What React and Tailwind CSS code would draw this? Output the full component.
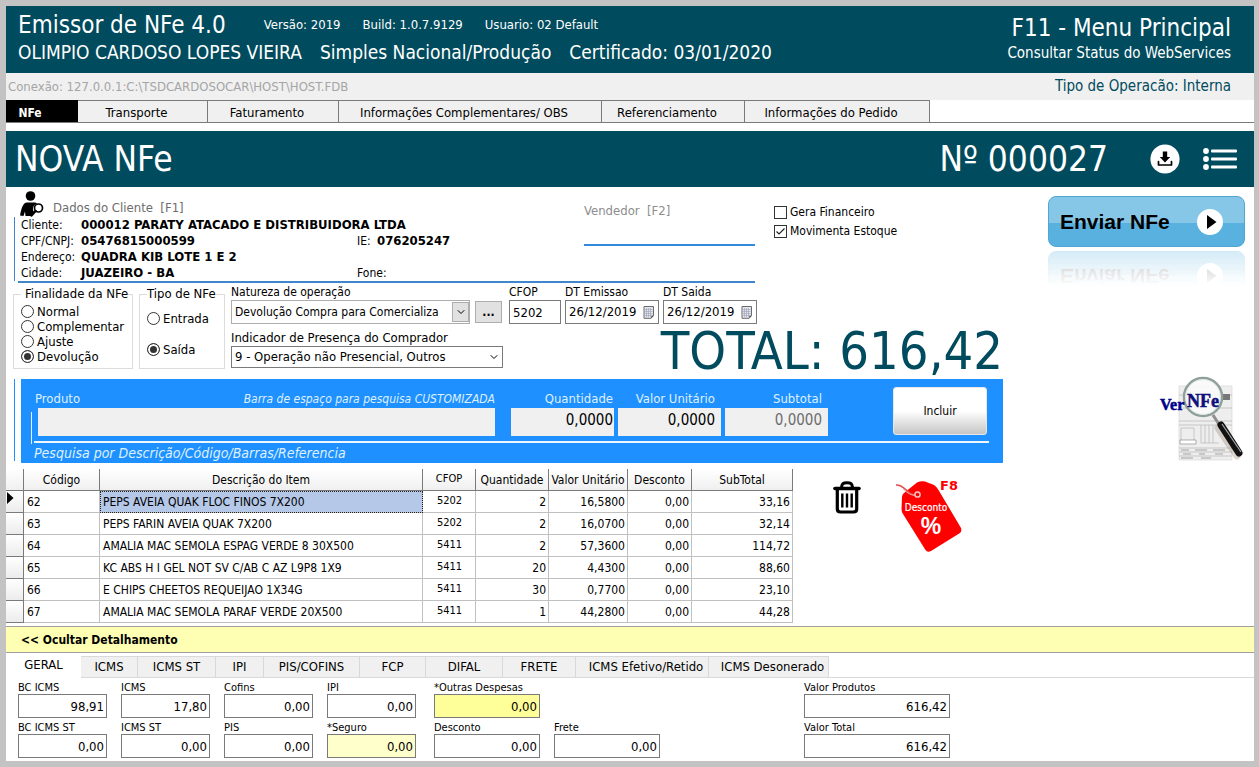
import { useState } from 'react';
import { FiChevronDown } from 'react-icons/fi';

const mainTabs = [
  { label: 'NFe', width: 'w-[72px]' },
  { label: 'Transporte', width: 'w-[130px]' },
  { label: 'Faturamento', width: 'w-[131px]' },
  { label: 'Informações Complementares/ OBS', width: 'w-[263px]' },
  { label: 'Referenciamento', width: 'w-[143px]' },
  { label: 'Informações do Pedido', width: 'w-[185px]' },
];

const detailTabs = [
  { label: 'GERAL', width: 'w-[75px]' },
  { label: 'ICMS', width: 'w-[57px]' },
  { label: 'ICMS ST', width: 'w-[78px]' },
  { label: 'IPI', width: 'w-12' },
  { label: 'PIS/COFINS', width: 'w-24' },
  { label: 'FCP', width: 'w-[66px]' },
  { label: 'DIFAL', width: 'w-[77px]' },
  { label: 'FRETE', width: 'w-[73px]' },
  { label: 'ICMS Efetivo/Retido', width: 'w-[133px] pl-2' },
  { label: 'ICMS Desonerado', width: 'w-[120px] pl-2' },
];

const items = [
  { codigo: '62', descricao: 'PEPS AVEIA QUAK FLOC FINOS 7X200', cfop: '5202', qtd: '2', unit: '16,5800', desc: '0,00', sub: '33,16' },
  { codigo: '63', descricao: 'PEPS FARIN AVEIA QUAK 7X200', cfop: '5202', qtd: '2', unit: '16,0700', desc: '0,00', sub: '32,14' },
  { codigo: '64', descricao: 'AMALIA MAC SEMOLA ESPAG VERDE 8 30X500', cfop: '5411', qtd: '2', unit: '57,3600', desc: '0,00', sub: '114,72' },
  { codigo: '65', descricao: 'KC ABS H I GEL NOT SV C/AB C AZ L9P8 1X9', cfop: '5411', qtd: '20', unit: '4,4300', desc: '0,00', sub: '88,60' },
  { codigo: '66', descricao: 'E CHIPS CHEETOS REQUEIJAO 1X34G', cfop: '5411', qtd: '30', unit: '0,7700', desc: '0,00', sub: '23,10' },
  { codigo: '67', descricao: 'AMALIA MAC SEMOLA PARAF VERDE 20X500', cfop: '5411', qtd: '1', unit: '44,2800', desc: '0,00', sub: '44,28' },
];

function ClientIcon() {
  return (
    <svg width="24" height="26" viewBox="0 0 24 26">
      <circle cx="10.500" cy="5" r="4.800" />
      <path d="M0 24.500 C1.500 17 3 11.500 7 11.500 H14 C15.500 11.500 16.500 12 17.300 12.600 A5.300 5.300 0 0 0 14 21 L11 25 H5.500 L5 20.500 L3.500 25 Z" />
      <circle cx="18.500" cy="17" r="4" fill="#fff" stroke="#000" strokeWidth="1.700" />
      <path d="M15.500 20 L11.500 24.500" stroke="#000" strokeWidth="2.400" strokeLinecap="round" />
    </svg>
  );
}

function DownloadIcon() {
  return (
    <svg width="30" height="30" viewBox="0 0 30 30">
      <circle cx="15" cy="15" r="14.600" fill="#fff" />
      <path d="M12.800 7.500 H17.200 V13 H20.200 L15 18.600 L9.800 13 H12.800 Z" />
      <path d="M8.500 17.500 V21 H21.500 V17.500" fill="none" stroke="#000" strokeWidth="1.700" strokeLinejoin="round" strokeLinecap="round" />
    </svg>
  );
}

function ListIcon() {
  return (
    <svg width="34" height="22" viewBox="0 0 34 22" fill="#fff">
      {[3, 11, 19].map((y) => (
        <g key={y}>
          <circle cx="3" cy={y} r="2.900" />
          <rect x="8" y={y - 1.5} width="26" height="3" rx="1" />
        </g>
      ))}
    </svg>
  );
}

function CalendarIcon() {
  return (
    <svg width="12" height="13" viewBox="0 0 12 13" className="shrink-0">
      <path d="M1 0.500 H10.500 V9.500 L8 12.300 H1 Z" fill="#e4e6ef" stroke="#6b6b6b" />
      <path d="M2 3.500 H9.500 M2 5.500 H9.500 M2 7.500 H9.500 M2 9.500 H8 M3.500 2 V11 M5.500 2 V11 M7.500 2 V11" stroke="#9a9fb5" strokeWidth="0.600" />
      <path d="M11 9.500 L8.300 12.500 V9.500 Z" fill="#555" />
    </svg>
  );
}

function TrashIcon() {
  return (
    <svg width="28" height="33" viewBox="0 0 28 33" fill="none" stroke="#000">
      <path d="M2 7.500 H26" strokeWidth="3.600" strokeLinecap="round" />
      <path d="M8.500 6.500 C9 2.800 10 1.700 14 1.700 S19 2.800 19.500 6.500" strokeWidth="3" />
      <path d="M4.300 8 V28 Q4.300 31 7.500 31 H20.500 Q23.700 31 23.700 28 V8" strokeWidth="3.200" />
      <path d="M9.300 12.500 V26.500 M14 12.500 V26.500 M18.700 12.500 V26.500" strokeWidth="2.400" />
    </svg>
  );
}

function DiscountTag() {
  return (
    <svg width="72" height="78" viewBox="0 0 72 78">
      <path d="M7 20 Q7 17.500 9 16 L22 5.500 Q26 3.500 30 4.500 L39 8 Q42 10 43.500 13 L66 51 Q67 54 65 56 L36 74 Q32.500 76 30.500 73 L8 37 Q6.500 35 6.500 32 Z" fill="#f00" />
      <path d="M1 8 C10 7 13 20 22 18" fill="none" stroke="#e04a4a" strokeWidth="1.600" />
      <path d="M8 12 C13 16 16 19 22 18" fill="none" stroke="#ffb0b0" strokeWidth="1" />
      <circle cx="22.500" cy="17.500" r="2.600" fill="#f00" stroke="#ffc4c4" strokeWidth="1.500" />
      <text x="31" y="34" textAnchor="middle" fontSize="10" fill="#fff" stroke="#fff" strokeWidth="0.200">Desconto</text>
      <text x="36" y="57" textAnchor="middle" fontSize="23" fontWeight="bold" fontFamily="Liberation Sans, sans-serif" fill="#fff">%</text>
      <text x="45" y="13" fontSize="13" fontWeight="bold" fontFamily="DejaVu Sans, sans-serif" fill="#f00">F8</text>
    </svg>
  );
}

function PreviewIcon() {
  return (
    <svg width="86" height="88" viewBox="0 0 86 88">
      <rect x="20" y="11" width="53" height="74" fill="#eeeeee" stroke="#d2d2d2" strokeWidth="0.600" />
      <path d="M20 20 H73 M20 33 H73 M20 46 H73 M20 50 H73 M22 53 H35 V68 H22 Z M42 50 V68 M46 50 V68 M50 50 V68 M54 50 V68 M42 68 H60 M20 73 H73 M20 77 H73 M20 81 H73" fill="none" stroke="#b5b5b5" strokeWidth="0.700" />
      <path d="M21 65 H37 V69 H21 Z" fill="#fff" stroke="#8d8d8d" strokeWidth="0.700" />
      <path d="M22 75 H30 M36 75 H48 M54 75 H66 M24 79 H32 M40 79 H46 M56 79 H64 M22 83 H34 M42 83 H52" stroke="#999" strokeWidth="0.900" />
      <rect x="63" y="19" width="8" height="6" fill="#777" />
      <path d="M54 40 L61 51" stroke="#8e8e8e" strokeWidth="3" />
      <path d="M59 53 L78 81" stroke="#9c8574" strokeWidth="7" strokeLinecap="round" opacity="0.350" />
      <path d="M62 50 L80 78" stroke="#111" strokeWidth="7" strokeLinecap="round" />
      <path d="M63 49 L82 77" stroke="#aaa" strokeWidth="1.200" />
      <circle cx="44" cy="22" r="19" fill="#f8faf9" fillOpacity="0.920" stroke="#8f9f99" strokeWidth="2.600" />
      <circle cx="44" cy="22" r="17.400" fill="none" stroke="#dfe8e4" strokeWidth="1" />
      <text x="1" y="35" fontSize="16" fontWeight="bold" fontFamily="Liberation Serif, serif" fill="#00008b" stroke="#00008b" strokeWidth="0.500">Ver</text>
      <text x="28" y="32" fontSize="18" fontWeight="bold" fontFamily="Liberation Serif, serif" fill="#10107c" stroke="#10107c" strokeWidth="0.500">NFe</text>
    </svg>
  );
}

function SendFace() {
  return (
    <>
      <span className="text-[21px] font-bold text-black">Enviar NFe</span>
      <svg width="26" height="28" viewBox="0 0 26 28">
        <circle cx="13" cy="14" r="13" fill="#fff" />
        <path d="M10 7 L19.500 14 L10 21 Z" />
      </svg>
    </>
  );
}

const sendFaceClass =
  "flex h-[51px] w-full items-center justify-between rounded-lg border border-[#4ea6d3] bg-linear-to-b from-[#86c7e7] from-54% to-[#58b1de] to-54% pl-[11px] pr-[21px] font-['Liberation_Sans',sans-serif]";

function Radio({ name, label, checked, onChange }) {
  return (
    <label className="flex items-center gap-[3px] text-[13px] leading-[15px]">
      <input
        type="radio"
        name={name}
        checked={checked}
        onChange={onChange}
        className="m-0 size-[13px] shrink-0 appearance-none rounded-full border border-[#333] bg-white checked:bg-[#333] checked:shadow-[inset_0_0_0_2px_#fff]"
      />
      {label}
    </label>
  );
}

function Check({ label, defaultChecked }) {
  return (
    <label className="flex items-center gap-[3px]">
      <span className="relative flex">
        <input type="checkbox" defaultChecked={defaultChecked} className="peer size-[13px] appearance-none border border-[#333] bg-white" />
        <svg width="13" height="13" viewBox="0 0 13 13" className="pointer-events-none absolute inset-0 hidden peer-checked:block">
          <path d="M2.500 6.500 L5 9 L10.500 3.500" fill="none" stroke="#222" strokeWidth="1.200" />
        </svg>
      </span>
      {label}
    </label>
  );
}

function DateField({ id, label, value }) {
  return (
    <div className="w-[94px]">
      <label htmlFor={id} className="block leading-4">{label}</label>
      <div className="flex h-6 items-center border border-[#7a7a7a] bg-white pr-[3px] pl-[3px]">
        <input id={id} defaultValue={value} className="w-full min-w-0 text-[13px] outline-none" />
        <CalendarIcon />
      </div>
    </div>
  );
}

function ProductField({ id, label, muted, pad = 'pr-[6px]' }) {
  return (
    <div className="w-[103px] text-right">
      <label htmlFor={id} className={`block text-[13px] leading-[18px] whitespace-nowrap text-[#dff1ff] ${pad}`}>{label}</label>
      <input
        id={id}
        defaultValue="0,0000"
        className={`block h-7 w-full bg-[#f0f0f0] pb-1 text-right text-[15px] outline-none ${pad} ${muted ? 'text-[#6d6d6d]' : 'text-black'}`}
      />
    </div>
  );
}

function TaxField({ id, label, value, width = 'w-[89px]', bg = 'bg-white' }) {
  return (
    <div className={width}>
      <label htmlFor={id} className="block text-[11px] leading-3 whitespace-nowrap">{label}</label>
      <input id={id} defaultValue={value} className={`block h-6 w-full border border-[#7a7a7a] pr-[2px] text-right text-[13px] outline-none ${bg}`} />
    </div>
  );
}

export default function App() {
  const [tab, setTab] = useState('NFe');
  const [detail, setDetail] = useState('GERAL');
  const [finalidade, setFinalidade] = useState('Devolução');
  const [tipo, setTipo] = useState('Saída');
  const [selected, setSelected] = useState('62');

  return (
    <div className="min-h-screen bg-[#c3c3c3] p-[6px] pr-[5px] font-['DejaVu_Sans_Condensed','Noto_Sans',sans-serif] text-[12px] text-black">
      <div className="bg-white">
        <header className="flex h-[67px] justify-between bg-[#004b5d] pr-[23px] pl-3 text-white">
          <div className="pt-1">
            <div className="flex items-center gap-[22px] text-[13px]">
              <h1 className="mr-4 text-[24px] leading-[30px]">Emissor de NFe 4.0</h1>
              <span>Versão: 2019</span>
              <span>Build: 1.0.7.9129</span>
              <span>Usuario: 02 Default</span>
            </div>
            <div className="flex gap-[18px] text-[19px] leading-6">
              <span>OLIMPIO CARDOSO LOPES VIEIRA</span>
              <span>Simples Nacional/Produção</span>
              <span>Certificado: 03/01/2020</span>
            </div>
          </div>
          <div className="flex flex-col items-end pt-2">
            <button type="button" className="text-[24px] leading-7">F11 - Menu Principal</button>
            <button type="button" className="text-[15px] leading-[22px]">Consultar Status do WebServices</button>
          </div>
        </header>

        <div className="flex h-[27px] items-center justify-between bg-[#f0f0f0] pr-[23px] pl-[2px]">
          <span className="text-[13px] text-[#a5a5a5]">Conexão: 127.0.0.1:C:\TSDCARDOSOCAR\HOST\HOST.FDB</span>
          <span className="text-[15px] text-[#004b5d]">Tipo de Operacão: Interna</span>
        </div>

        <nav className="mb-2 flex h-[23px] border-b border-[#7a7a7a]">
          {mainTabs.map((t) => (
            <button
              key={t.label}
              type="button"
              onClick={() => setTab(t.label)}
              className={`${t.width} whitespace-nowrap ${tab === t.label ? 'bg-black pt-1 pr-6 text-[12px] font-bold text-white' : 'border-t border-r border-[#7a7a7a] bg-[#f0f0f0] pt-[2px] pr-3 text-[13px]'}`}
            >
              {t.label}
            </button>
          ))}
        </nav>

        <div className="flex h-14 items-center justify-between bg-[#004b5d] pr-[17px] pl-[9px] text-white">
          <h2 className="text-[35px]">NOVA NFe</h2>
          <div className="flex items-center">
            <span className="mr-[42px] text-[35px]">Nº 000027</span>
            <button type="button" aria-label="Baixar" className="mr-[23px]"><DownloadIcon /></button>
            <button type="button" aria-label="Listar"><ListIcon /></button>
          </div>
        </div>

        <div className="flex">
          <main className="flex-1">
            <div className="flex">
              <section className="w-[749px]">
                <div className="flex justify-between">
                  <div>
                    <div className="flex h-[30px] items-end gap-[9px] pl-[14px]">
                      <ClientIcon />
                      <h3 className="text-[13px] leading-[18px] text-[#6d6d6d]">Dados do Cliente&nbsp; [F1]</h3>
                    </div>
                    <div className="ml-2 border-l border-[#3f86cc]">
                      <dl className="grid grid-cols-[60px_276px_20px_1fr] pl-[6px] leading-4 whitespace-nowrap [&>dd]:text-[13px] [&>dd]:font-bold">
                        <dt>Cliente:</dt>
                        <dd className="col-span-3">000012 PARATY ATACADO E DISTRIBUIDORA LTDA</dd>
                        <dt>CPF/CNPJ:</dt>
                        <dd>05476815000599</dd>
                        <dt>IE:</dt>
                        <dd>076205247</dd>
                        <dt>Endereço:</dt>
                        <dd className="col-span-3">QUADRA KIB LOTE 1 E 2</dd>
                        <dt>Cidade:</dt>
                        <dd>JUAZEIRO - BA</dd>
                        <dt>Fone:</dt>
                        <dd></dd>
                      </dl>
                    </div>
                  </div>
                  <div className="h-[59px] w-[171px] border-b-2 border-[#3189e0] pt-[14px] text-[13px] text-[#8d8d8d]">Vendedor&nbsp; [F2]</div>
                </div>
                <div className="ml-3 h-[2px] bg-[#3f86cc]" />
              </section>
              <div className="flex flex-col gap-[1px] pt-4 pl-[19px]">
                <Check label="Gera Financeiro" />
                <Check label="Movimenta Estoque" defaultChecked />
              </div>
            </div>

            <div className="flex h-24 gap-[6px] pt-[1px] pl-[7px]">
              <fieldset className="mt-[2px] h-[83px] w-[120px] border border-[#dcdcdc] pl-[7px]">
                <legend className="pl-1 text-[13px] leading-4 whitespace-nowrap">Finalidade da NFe</legend>
                <div className="pt-[2px]">
                  {['Normal', 'Complementar', 'Ajuste', 'Devolução'].map((f) => (
                    <Radio key={f} name="finalidade" label={f} checked={finalidade === f} onChange={() => setFinalidade(f)} />
                  ))}
                </div>
              </fieldset>
              <fieldset className="mt-[2px] h-[83px] w-[86px] border border-[#dcdcdc] pl-[7px]">
                <legend className="text-[13px] leading-4 whitespace-nowrap">Tipo de NFe</legend>
                <div className="flex flex-col gap-4 pt-[9px]">
                  {['Entrada', 'Saída'].map((t) => (
                    <Radio key={t} name="tipo" label={t} checked={tipo === t} onChange={() => setTipo(t)} />
                  ))}
                </div>
              </fieldset>
              <div className="w-[272px]">
                <label htmlFor="natureza" className="block leading-4">Natureza de operação</label>
                <div className="flex gap-[5px]">
                  <div className="relative w-[239px]">
                    <select id="natureza" className="h-6 w-full appearance-none border border-[#adadad] bg-white pr-5 pl-[3px] outline-none">
                      <option>Devolução Compra para Comercializa</option>
                    </select>
                    <span className="pointer-events-none absolute top-[2px] right-[1px] flex h-5 w-[17px] items-center justify-center border border-[#adadad] bg-[#e1e1e1]">
                      <FiChevronDown size={12} />
                    </span>
                  </div>
                  <button type="button" className="mt-[1px] h-[22px] w-[27px] border border-[#adadad] bg-[#e1e1e1] font-bold">...</button>
                </div>
                <label htmlFor="presenca" className="mt-[6px] block text-[13px] leading-4 whitespace-nowrap">Indicador de Presença do Comprador</label>
                <div className="relative">
                  <select id="presenca" className="h-[22px] w-full appearance-none border border-[#7a7a7a] bg-white pl-[3px] text-[13px] outline-none">
                    <option>9 - Operação não Presencial, Outros</option>
                  </select>
                  <FiChevronDown size={12} className="pointer-events-none absolute top-[5px] right-[3px]" />
                </div>
              </div>
              <div className="flex flex-1 flex-col">
                <div className="flex gap-1">
                  <div className="w-[52px]">
                    <label htmlFor="cfop" className="block leading-4">CFOP</label>
                    <input id="cfop" defaultValue="5202" className="block h-6 w-full border border-[#7a7a7a] pl-[3px] text-[13px] outline-none" />
                  </div>
                  <DateField id="emissao" label="DT Emissao" value="26/12/2019" />
                  <DateField id="saida" label="DT Saida" value="26/12/2019" />
                </div>
                <div className="text-right text-[52px] leading-[55px] text-[#004b5d]">TOTAL: 616,42</div>
              </div>
            </div>

            <div className="flex pl-2">
              <div className="mr-[6px] h-[82px] w-px bg-[#1e90ff]" />
              <section className="flex h-[84px] flex-1 bg-[#1e90ff] pr-[14px] pl-[10px]">
                <div className="mt-[33px] mr-[2px] h-8 w-px bg-[#dff1ff]" />
                <div className="flex-1">
                  <div className="flex h-[62px]">
                    <div className="w-[461px] pt-[11px]">
                      <div className="flex justify-between leading-[18px] text-[#dff1ff]">
                        <label htmlFor="produto" className="pl-[1px] text-[13px]">Produto</label>
                        <em>Barra de espaço para pesquisa CUSTOMIZADA</em>
                      </div>
                      <div className="pl-1">
                        <input id="produto" className="block h-7 w-full bg-[#f0f0f0] px-1 text-[15px] text-black outline-none" />
                      </div>
                    </div>
                    <div className="ml-4 flex gap-1 pt-[11px]">
                      <ProductField id="quantidade" label="Quantidade" pad="pr-[1px]" />
                      <ProductField id="unitario" label="Valor Unitário" />
                      <ProductField id="subtotal" label="Subtotal" muted />
                    </div>
                    <button type="button" className="mt-2 mr-[2px] ml-auto h-12 w-[94px] rounded-[3px] border border-[#e8e8e8] bg-linear-to-b from-white from-50% to-[#c6c6c6]">Incluir</button>
                  </div>
                  <div className="h-[2px] bg-[#f0f8ff]" />
                  <em className="block text-[14px] leading-5 text-[#dff1ff]">Pesquisa por Descrição/Código/Barras/Referencia</em>
                </div>
              </section>
            </div>

            <div className="flex pt-[6px]">
              <table className="w-[787px] table-fixed border-separate border-spacing-0 whitespace-nowrap">
                <colgroup>
                  <col className="w-[18px]" />
                  <col className="w-[76px]" />
                  <col className="w-[323px]" />
                  <col className="w-[53px]" />
                  <col className="w-[73px]" />
                  <col className="w-[79px]" />
                  <col className="w-16" />
                  <col className="w-[101px]" />
                </colgroup>
                <thead>
                  <tr className="h-[22px] bg-linear-to-b from-white to-[#efefef] *:border-r *:border-b *:border-[#7a7a7a] *:p-0 *:font-normal">
                    <th></th>
                    <th>Código</th>
                    <th>Descrição do Item</th>
                    <th className="text-[11px]">CFOP</th>
                    <th>Quantidade</th>
                    <th>Valor Unitário</th>
                    <th>Desconto</th>
                    <th>SubTotal</th>
                  </tr>
                </thead>
                <tbody>
                  {items.map((item) => (
                    <tr
                      key={item.codigo}
                      onClick={() => setSelected(item.codigo)}
                      className="h-[22px] *:border-r *:border-b *:border-[#c0c0c0] *:py-0 *:pr-[2px] *:pl-[3px]"
                    >
                      <td className="border-[#7a7a7a]! bg-linear-to-b from-white to-[#ececec] pl-[1px]!">
                        {selected === item.codigo && (
                          <svg width="7" height="12" viewBox="0 0 7 12" className="mb-2"><path d="M0 0 L6.500 6 L0 12 Z" /></svg>
                        )}
                      </td>
                      <td>{item.codigo}</td>
                      <td className={selected === item.codigo ? 'bg-[#b5c8e8] outline-1 -outline-offset-1 outline-dotted outline-[#222]' : ''}>{item.descricao}</td>
                      <td className="text-center text-[11px]">{item.cfop}</td>
                      <td className="text-right">{item.qtd}</td>
                      <td className="text-right">{item.unit}</td>
                      <td className="text-right">{item.desc}</td>
                      <td className="text-right">{item.sub}</td>
                    </tr>
                  ))}
                </tbody>
              </table>
              <div className="flex items-start gap-[34px] pl-10">
                <button type="button" aria-label="Excluir item" className="mt-3"><TrashIcon /></button>
                <button type="button" className="mt-2"><DiscountTag /></button>
              </div>
            </div>
          </main>

          <aside className="w-[251px] pt-[9px] pr-[9px] pl-[45px]">
            <button type="button" className={sendFaceClass}><SendFace /></button>
            <div aria-hidden="true" className="mt-1 mask-linear-180 mask-linear-from-0% mask-linear-to-70% opacity-25">
              <div className={`${sendFaceClass} -scale-y-100`}><SendFace /></div>
            </div>
            <div className="mt-[73px] flex justify-end">
              <button type="button" aria-label="Ver NFe"><PreviewIcon /></button>
            </div>
          </aside>
        </div>

        <button type="button" className="mt-[3px] block h-[27px] w-full border-y border-[#a0a0a0] bg-[#ffffb3] pl-[15px] text-left font-bold">
          &lt;&lt; Ocultar Detalhamento
        </button>

        <nav className="flex items-end pt-[1px] text-[13px]">
          {detailTabs.map((t) => (
            <button
              key={t.label}
              type="button"
              onClick={() => setDetail(t.label)}
              className={`${t.width} whitespace-nowrap ${detail === t.label ? 'h-6 pb-[3px]' : 'h-[22px] border border-l-0 border-[#d9d9d9] bg-[#f0f0f0]'}`}
            >
              {t.label}
            </button>
          ))}
          <div className="flex-1 border-b border-[#d9d9d9]" />
        </nav>

        <section className="flex items-start pt-1 pb-[3px] pl-3">
          <div className="grid grid-cols-[89px_89px_89px_93px_106px_106px] gap-x-[14px] gap-y-1">
            <TaxField id="bc-icms" label="BC ICMS" value="98,91" />
            <TaxField id="icms" label="ICMS" value="17,80" />
            <TaxField id="cofins" label="Cofins" value="0,00" />
            <TaxField id="ipi" label="IPI" value="0,00" />
            <TaxField id="outras" label="*Outras Despesas" value="0,00" width="w-[106px]" bg="bg-[#ffff99]" />
            <span />
            <TaxField id="bc-icms-st" label="BC ICMS ST" value="0,00" />
            <TaxField id="icms-st" label="ICMS ST" value="0,00" />
            <TaxField id="pis" label="PIS" value="0,00" />
            <TaxField id="seguro" label="*Seguro" value="0,00" bg="bg-[#ffffcc]" />
            <TaxField id="desconto" label="Desconto" value="0,00" width="w-[106px]" />
            <TaxField id="frete" label="Frete" value="0,00" width="w-[106px]" />
          </div>
          <div className="ml-36 flex flex-col gap-1">
            <TaxField id="valor-produtos" label="Valor Produtos" value="616,42" width="w-[146px]" />
            <TaxField id="valor-total" label="Valor Total" value="616,42" width="w-[146px]" />
          </div>
        </section>
      </div>
    </div>
  );
}
